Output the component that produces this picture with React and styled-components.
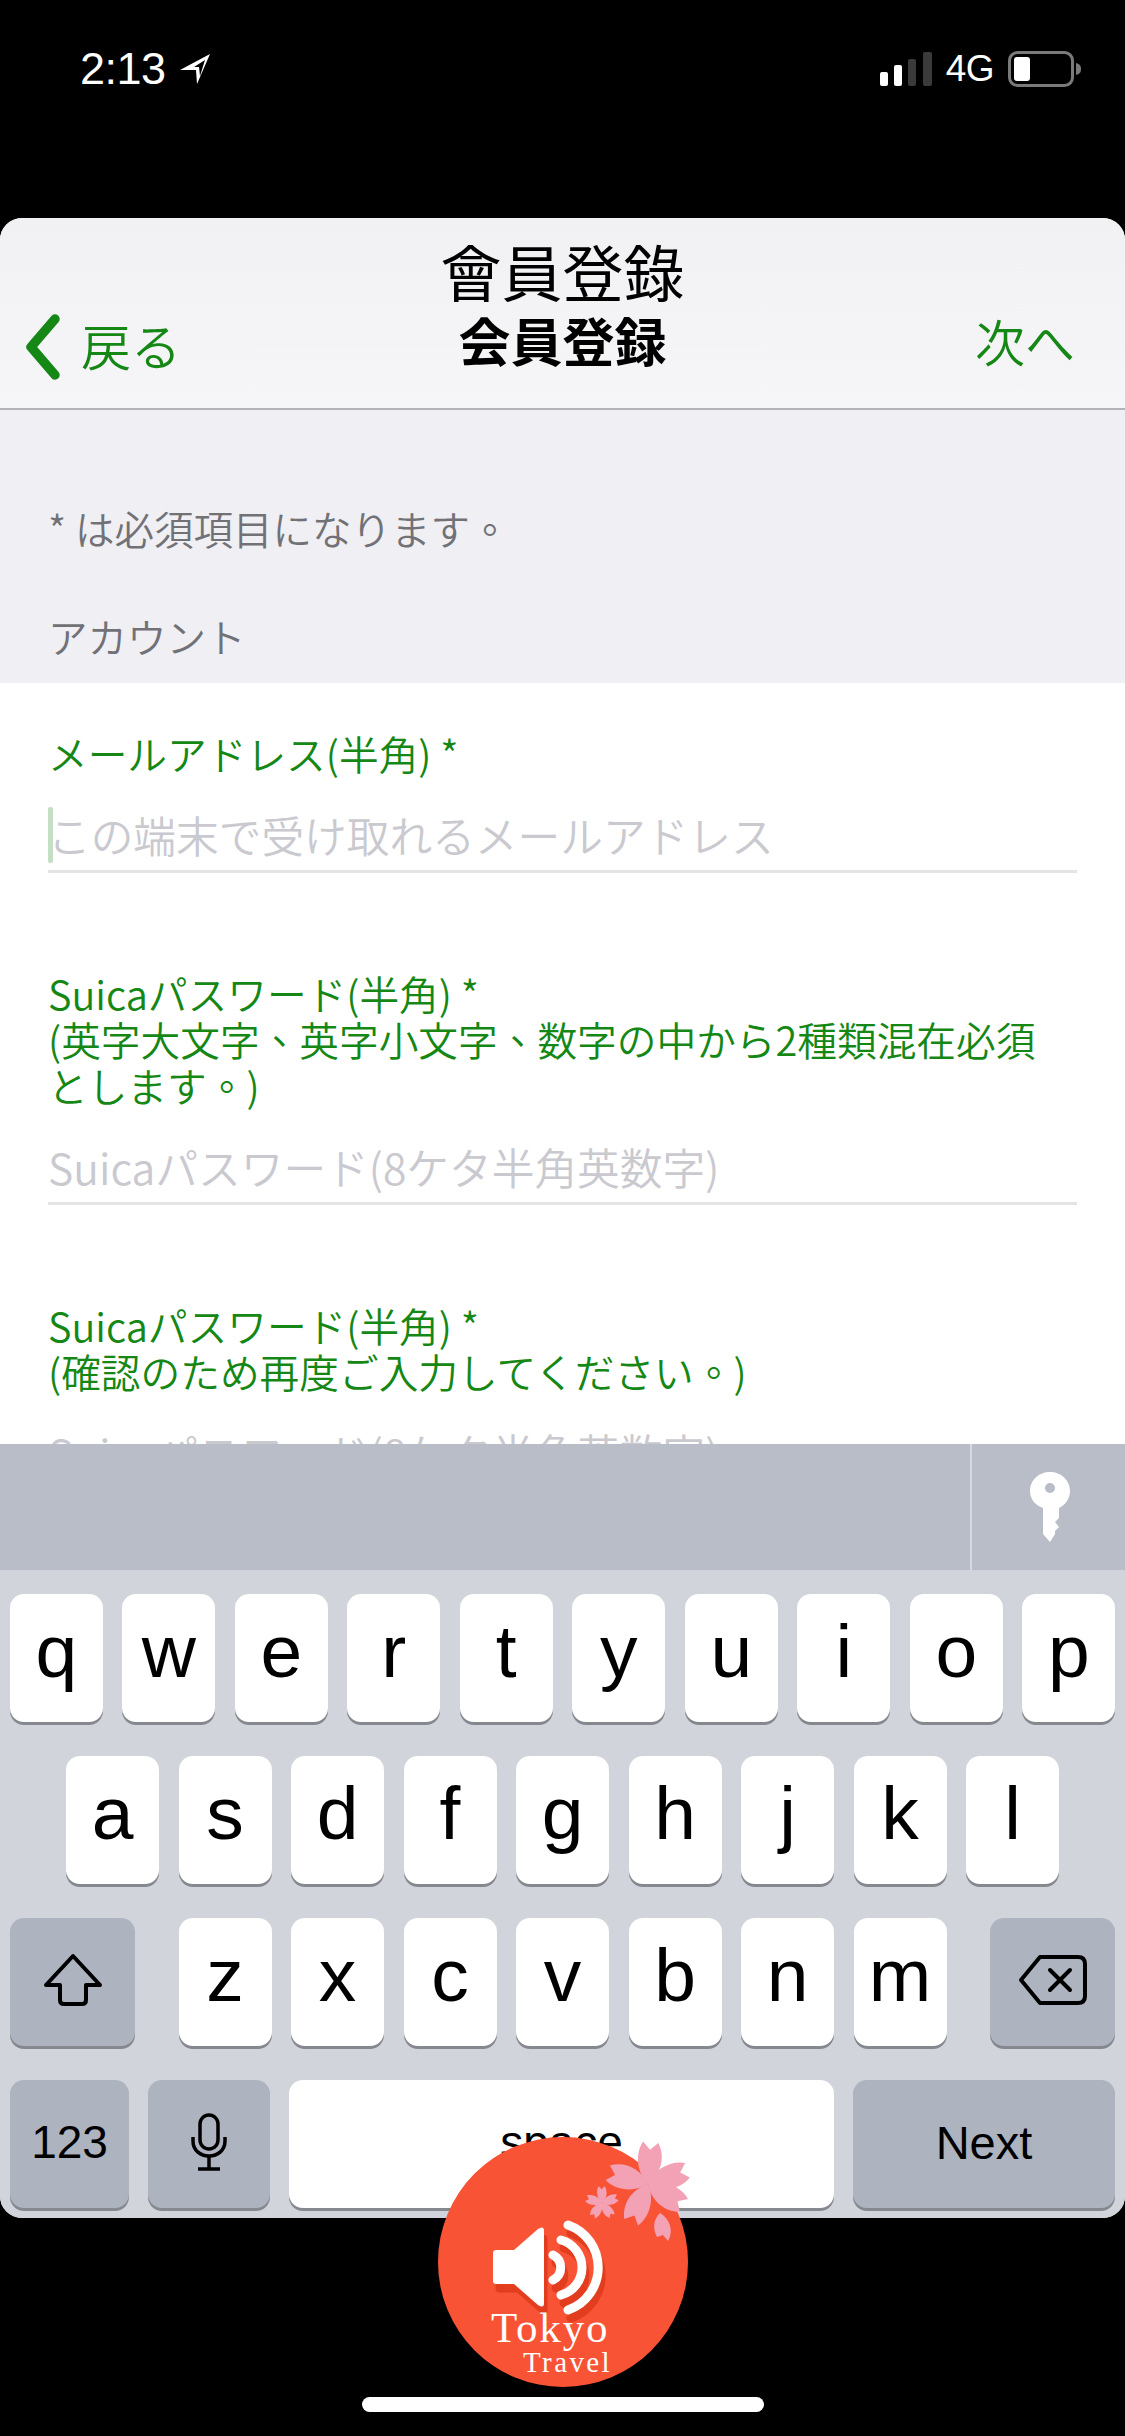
import React from 'react'
import styled, { createGlobalStyle } from 'styled-components'

const CJK = `"Noto Sans CJK JP", "Liberation Sans", sans-serif`
const LATIN = `"Liberation Sans", Arial, sans-serif`
const GREEN = '#148714'

const GlobalStyle = createGlobalStyle`
  html, body {
    margin: 0;
    padding: 0;
    background: #000;
  }
  * {
    box-sizing: border-box;
  }
`

const Screen = styled.div`
  position: relative;
  width: 1125px;
  height: 2436px;
  background: #000;
  display: flex;
  flex-direction: column;
  overflow: hidden;
`

const StatusBar = styled.header`
  height: 218px;
  flex: none;
  padding: 45px 43px 0 80px;
  display: flex;
  align-items: flex-start;
  justify-content: space-between;
  color: #fff;
  font-family: ${LATIN};
`

const StatusGroup = styled.div`
  height: 48px;
  display: flex;
  align-items: center;
  gap: ${(p) => p.$gap}px;
`

const Time = styled.span`
  font-size: 45px;
  font-weight: 500;
  letter-spacing: -0.5px;
`

const Network = styled.span`
  font-size: 37px;
  letter-spacing: -0.5px;
`

const Sheet = styled.main`
  flex: none;
  height: 2000px;
  border-radius: 22px;
  overflow: hidden;
  display: flex;
  flex-direction: column;
  background: #fff;
`

const NavBar = styled.nav`
  flex: none;
  height: 192px;
  background: linear-gradient(#f1f1f4, #f6f6f9);
  border-bottom: 2px solid #b4b4b8;
  padding: 18px 24px 0;
  display: grid;
  grid-template-columns: 1fr auto 1fr;
  align-items: start;
  font-family: ${CJK};
`

const NavSide = styled.div`
  margin-top: 72px;
  padding-right: ${(p) => (p.$end ? 26 : 0)}px;
  display: flex;
  align-items: center;
  justify-content: ${(p) => (p.$end ? 'flex-end' : 'flex-start')};
  gap: 19px;
  color: ${GREEN};
  font-size: 50px;
  font-weight: 350;
  line-height: 64px;
`

const BackMark = styled.svg`
  margin-top: 6px;
  flex: none;
`

const NavTitles = styled.div`
  text-align: center;
  color: #000;
`

const AppTitle = styled.div`
  font-size: 61px;
  line-height: 70px;
`

const PageTitle = styled.div`
  font-size: 52px;
  font-weight: 700;
  line-height: 64px;
  margin-top: 2px;
`

const Content = styled.section`
  flex: 1;
  min-height: 0;
  overflow: hidden;
  font-family: ${CJK};
`

const Intro = styled.div`
  background: #efeff4;
  height: 273px;
  padding: 95px 48px 0;
  color: #717176;
  font-size: 39.5px;
  font-weight: 350;
  line-height: 46px;
`

const SectionHead = styled.div`
  margin-top: 62px;
`

const Fields = styled.div`
  padding: 47px 48px 0;
  display: flex;
  flex-direction: column;
  gap: 97px;
`

const Label = styled.label`
  display: block;
  color: ${GREEN};
  font-size: 39.7px;
  font-weight: 350;
  line-height: 46px;
`

const Input = styled.div`
  position: relative;
  margin-top: 31px;
  height: 66px;
  border-bottom: 3px solid #e4e4e6;
  color: #c9c9cf;
  font-size: 42.7px;
  font-weight: 350;
  line-height: 54px;
  white-space: nowrap;
`

const Caret = styled.span`
  position: absolute;
  left: 0;
  top: 0;
  width: 5px;
  height: 56px;
  border-radius: 2px;
  background: #c5dfc5;
`

// Japanese copy set with the centred punctuation forms of the TC cut
const Punct = styled.span`
  font-family: "Noto Sans CJK TC", sans-serif;
`

const Keyboard = styled.section`
  flex: none;
  height: 774px;
  background: #d1d5db;
  font-family: ${LATIN};
  color: #000;
`

const Accessory = styled.div`
  height: 126px;
  background: #b8bdc7;
  display: flex;
  justify-content: flex-end;
`

const AccessoryButton = styled.div`
  width: 155px;
  border-left: 2px solid #d6d9df;
  padding-left: 58px;
  display: flex;
  align-items: center;
`

const Rows = styled.div`
  padding-top: 24px;
  display: flex;
  flex-direction: column;
  gap: 34px;
`

const Row = styled.div`
  display: flex;
  justify-content: ${(p) => p.$justify || 'center'};
  gap: ${(p) => p.$gap || 19.5}px;
  padding: 0 10px;
`

const KeyGroup = styled.div`
  display: flex;
  gap: 19.5px;
`

const Key = styled.div`
  flex: none;
  width: ${(p) => p.$width || 93}px;
  height: 128px;
  border-radius: 14px;
  background: ${(p) => (p.$fn ? '#adb4c0' : '#fff')};
  box-shadow: 0 3px 0 #85888e;
  display: flex;
  align-items: center;
  justify-content: center;
  font-size: ${(p) => p.$size || 75}px;
  padding-bottom: ${(p) => (p.$size ? 4 : 14)}px;
  line-height: 1;
`

const HomeArea = styled.footer`
  flex: 1;
  display: flex;
  align-items: flex-end;
  justify-content: center;
  padding-bottom: 24px;
`

const HomeBar = styled.div`
  width: 402px;
  height: 15px;
  border-radius: 8px;
  background: #fff;
`

const VoiceButton = styled.div`
  position: absolute;
  left: 438px;
  top: 2137px;
  width: 250px;
  height: 250px;
  border-radius: 50%;
  background: #f95335;
  display: flex;
  flex-direction: column;
  align-items: flex-start;
  padding: 171px 0 0 53px;
  color: #fff;
  font-family: "Liberation Serif", "Times New Roman", serif;
`

const VoiceArt = styled.svg`
  position: absolute;
  left: 0;
  top: 0;
  overflow: visible;
`

const Tokyo = styled.span`
  position: relative;
  font-size: 43px;
  line-height: 40px;
  letter-spacing: 1.8px;
`

const Travel = styled.span`
  position: relative;
  margin: -1px 0 0 32px;
  font-size: 29px;
  line-height: 30px;
  letter-spacing: 2.4px;
`

const TOP_ROW = 'qwertyuiop'.split('')
const MIDDLE_ROW = 'asdfghjkl'.split('')
const BOTTOM_ROW = 'zxcvbnm'.split('')

const punctuated = (text) =>
  text.split(/([、。])/).map((part, i) => (i % 2 ? <Punct key={i}>{part}</Punct> : part))

const LocationArrow = () => (
  <svg width="34" height="32" viewBox="0 0 34 32">
    <path d="M32 1 L2 17 L18 17 L19 31 Z M27 7 L16 14 L21 14 L22 23 Z" fill="#fff" fillRule="evenodd" />
  </svg>
)

const SignalBars = () => (
  <svg width="52" height="34" viewBox="0 0 52 34">
    <rect x="0" y="20" width="8" height="14" rx="2" fill="#fff" />
    <rect x="14" y="13" width="8" height="21" rx="2" fill="#fff" />
    <rect x="28" y="7" width="8" height="27" rx="2" fill="#3a3a3a" />
    <rect x="43" y="0" width="9" height="34" rx="2" fill="#3a3a3a" />
  </svg>
)

const Battery = () => (
  <svg width="74" height="36" viewBox="0 0 74 36">
    <rect x="1.5" y="1.5" width="63" height="33" rx="8" fill="none" stroke="#7a7a7a" strokeWidth="3" />
    <rect x="6" y="6" width="16" height="24" rx="3" fill="#fff" />
    <path d="M68 12 C72 13 73 15 73 18 C73 21 72 23 68 24 Z" fill="#7a7a7a" />
  </svg>
)

const BackChevron = () => (
  <BackMark width="38" height="66" viewBox="0 0 38 66">
    <path d="M31 5 L7 33 L31 61" fill="none" stroke={GREEN} strokeWidth="9.5" strokeLinecap="round" strokeLinejoin="round" />
  </BackMark>
)

const KeyIcon = () => (
  <svg width="40" height="70" viewBox="0 0 40 70">
    <path
      d="M20 0 C31 0 40 8 40 19 C40 27 35 33 29 36 V46 L25 50 L29 55 L25 59 V62 L20 70 L13 62 V36 C5 33 0 27 0 19 C0 8 9 0 20 0 Z M20 11 A5 5 0 1 0 20 21 A5 5 0 1 0 20 11 Z"
      fill="#fff"
      fillRule="evenodd"
    />
  </svg>
)

const ShiftIcon = () => (
  <svg width="60" height="54" viewBox="0 0 60 54">
    <path
      d="M30 3 L57 32 H43 V47 Q43 51 39 51 H21 Q17 51 17 47 V32 H3 Z"
      fill="none"
      stroke="#000"
      strokeWidth="4"
      strokeLinejoin="round"
    />
  </svg>
)

const DeleteIcon = () => (
  <svg width="70" height="52" viewBox="0 0 70 52">
    <path
      d="M22 3 H60 Q67 3 67 10 V42 Q67 49 60 49 H22 L3 26 Z"
      fill="none"
      stroke="#000"
      strokeWidth="4"
      strokeLinejoin="round"
    />
    <path d="M32 16 L52 36 M52 16 L32 36" stroke="#000" strokeWidth="4" strokeLinecap="round" />
  </svg>
)

const MicIcon = () => (
  <svg width="36" height="58" viewBox="0 0 36 58">
    <rect x="9" y="2" width="18" height="34" rx="9" fill="none" stroke="#000" strokeWidth="3.5" />
    <path d="M2 24 V28 C2 37 9 43 18 43 C27 43 34 37 34 28 V24" fill="none" stroke="#000" strokeWidth="3.5" />
    <path d="M18 43 V55 M7 56 H29" stroke="#000" strokeWidth="3.5" />
  </svg>
)

const PETAL = 'M0 0 C-14 -12 -16 -32 -9 -44 L-1 -36 L7 -44 C16 -30 13 -12 0 0 Z'

const Blossom = ({ x, y, scale, angles }) => (
  <g transform={`translate(${x} ${y}) scale(${scale})`} fill="#f3a1b5">
    {angles.map((angle) => (
      <path key={angle} d={PETAL} transform={`rotate(${angle})`} />
    ))}
  </g>
)

const SPEAKER = 'M58 113 H76 L100 92 Q106 88 106 94 V166 Q106 172 100 168 L76 147 H58 Q55 147 55 144 V116 Q55 113 58 113 Z'
const WAVES = 'M115 118 A14 14 0 0 1 115 143 M123 103 A28.5 28.5 0 0 1 123 158 M130 88 A45 45 0 0 1 130 173'

const VoiceGraphic = () => (
  <VoiceArt width="250" height="250" viewBox="0 0 250 250">
    <g transform="translate(3 8)" fill="#e23d1e" stroke="#e23d1e">
      <path d={SPEAKER} />
      <path d={WAVES} fill="none" strokeWidth="9" strokeLinecap="round" />
    </g>
    <path d={SPEAKER} fill="#fff" />
    <path d={WAVES} fill="none" stroke="#fff" strokeWidth="9" strokeLinecap="round" />
    <Blossom x={210} y={47} scale={0.95} angles={[5, 72, 122, 205, 287]} />
    <Blossom x={164} y={66} scale={0.38} angles={[0, 72, 144, 216, 288]} />
    <path d="M222 76 C232 82 236 94 230 104 L225 98 L219 100 C214 90 216 82 222 76 Z" fill="#f3a1b5" />
  </VoiceArt>
)

const FIELDS = [
  {
    label: ['メールアドレス(半角) *'],
    placeholder: 'この端末で受け取れるメールアドレス',
    focused: true,
  },
  {
    label: ['Suicaパスワード(半角) *', '(英字大文字、英字小文字、数字の中から2種類混在必須', 'とします。)'],
    placeholder: 'Suicaパスワード(8ケタ半角英数字)',
  },
  {
    label: ['Suicaパスワード(半角) *', '(確認のため再度ご入力してください。)'],
    placeholder: 'Suicaパスワード(8ケタ半角英数字)',
  },
]

export default function App() {
  return (
    <>
      <GlobalStyle />
      <Screen>
        <StatusBar>
          <StatusGroup $gap={12}>
            <Time>2:13</Time>
            <LocationArrow />
          </StatusGroup>
          <StatusGroup $gap={14}>
            <SignalBars />
            <Network>4G</Network>
            <Battery />
          </StatusGroup>
        </StatusBar>

        <Sheet>
          <NavBar>
            <NavSide>
              <BackChevron />
              <span>戻る</span>
            </NavSide>
            <NavTitles>
              <AppTitle>會員登錄</AppTitle>
              <PageTitle>会員登録</PageTitle>
            </NavTitles>
            <NavSide $end>次へ</NavSide>
          </NavBar>

          <Content>
            <Intro>
              <div>{punctuated('* は必須項目になります。')}</div>
              <SectionHead>アカウント</SectionHead>
            </Intro>
            <Fields>
              {FIELDS.map((field, i) => (
                <div key={i}>
                  <Label>
                    {field.label.map((line) => (
                      <div key={line}>{punctuated(line)}</div>
                    ))}
                  </Label>
                  <Input>
                    {field.focused && <Caret />}
                    {field.placeholder}
                  </Input>
                </div>
              ))}
            </Fields>
          </Content>

          <Keyboard>
            <Accessory>
              <AccessoryButton>
                <KeyIcon />
              </AccessoryButton>
            </Accessory>
            <Rows>
              <Row>
                {TOP_ROW.map((k) => (
                  <Key key={k}>{k}</Key>
                ))}
              </Row>
              <Row>
                {MIDDLE_ROW.map((k) => (
                  <Key key={k}>{k}</Key>
                ))}
              </Row>
              <Row $justify="space-between">
                <Key $fn $width={125} $size={46}>
                  <ShiftIcon />
                </Key>
                <KeyGroup>
                  {BOTTOM_ROW.map((k) => (
                    <Key key={k}>{k}</Key>
                  ))}
                </KeyGroup>
                <Key $fn $width={125} $size={46}>
                  <DeleteIcon />
                </Key>
              </Row>
              <Row $justify="flex-start" $gap={19}>
                <Key $fn $width={119} $size={46}>123</Key>
                <Key $fn $width={122} $size={46}>
                  <MicIcon />
                </Key>
                <Key $width={545} $size={46}>space</Key>
                <Key $fn $width={262} $size={47}>Next</Key>
              </Row>
            </Rows>
          </Keyboard>
        </Sheet>

        <HomeArea>
          <HomeBar />
        </HomeArea>

        <VoiceButton>
          <VoiceGraphic />
          <Tokyo>Tokyo</Tokyo>
          <Travel>Travel</Travel>
        </VoiceButton>
      </Screen>
    </>
  )
}
